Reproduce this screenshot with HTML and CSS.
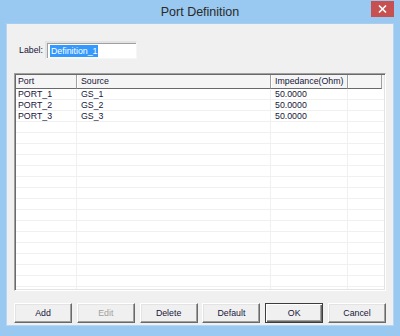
FILE: index.html
```html
<!DOCTYPE html>
<html>
<head>
<meta charset="utf-8">
<link rel="stylesheet" href="styles.css">
</head>
<body>
<div class="window">
  <div class="titlebar">
    <span class="title">Port Definition</span>
    <div class="close"><svg width="9" height="8" viewBox="0 0 9 8"><path d="M1 0.5 L8 7.5 M8 0.5 L1 7.5" stroke="#fff" stroke-width="1.6"/></svg></div>
  </div>
  <div class="client">
    <div class="label-row">
      <span class="label">Label:</span>
      <div class="input"><span class="sel">Definition_1</span></div>
    </div>
    <div class="table">
      <div class="row head">
        <div class="c c1">Port</div><div class="c c2">Source</div><div class="c c3">Impedance(Ohm)</div><div class="c c4"></div>
      </div>
      <div class="body">
        <div class="row"><div class="c c1">PORT_1</div><div class="c c2">GS_1</div><div class="c c3">50.0000</div><div class="c c4"></div></div>
        <div class="row"><div class="c c1">PORT_2</div><div class="c c2">GS_2</div><div class="c c3">50.0000</div><div class="c c4"></div></div>
        <div class="row"><div class="c c1">PORT_3</div><div class="c c2">GS_3</div><div class="c c3">50.0000</div><div class="c c4"></div></div>
        <div class="row"><div class="c c1"></div><div class="c c2"></div><div class="c c3"></div><div class="c c4"></div></div>
        <div class="row"><div class="c c1"></div><div class="c c2"></div><div class="c c3"></div><div class="c c4"></div></div>
        <div class="row"><div class="c c1"></div><div class="c c2"></div><div class="c c3"></div><div class="c c4"></div></div>
        <div class="row"><div class="c c1"></div><div class="c c2"></div><div class="c c3"></div><div class="c c4"></div></div>
        <div class="row"><div class="c c1"></div><div class="c c2"></div><div class="c c3"></div><div class="c c4"></div></div>
        <div class="row"><div class="c c1"></div><div class="c c2"></div><div class="c c3"></div><div class="c c4"></div></div>
        <div class="row"><div class="c c1"></div><div class="c c2"></div><div class="c c3"></div><div class="c c4"></div></div>
        <div class="row"><div class="c c1"></div><div class="c c2"></div><div class="c c3"></div><div class="c c4"></div></div>
        <div class="row"><div class="c c1"></div><div class="c c2"></div><div class="c c3"></div><div class="c c4"></div></div>
        <div class="row"><div class="c c1"></div><div class="c c2"></div><div class="c c3"></div><div class="c c4"></div></div>
        <div class="row"><div class="c c1"></div><div class="c c2"></div><div class="c c3"></div><div class="c c4"></div></div>
        <div class="row"><div class="c c1"></div><div class="c c2"></div><div class="c c3"></div><div class="c c4"></div></div>
        <div class="row"><div class="c c1"></div><div class="c c2"></div><div class="c c3"></div><div class="c c4"></div></div>
        <div class="row"><div class="c c1"></div><div class="c c2"></div><div class="c c3"></div><div class="c c4"></div></div>
        <div class="row"><div class="c c1"></div><div class="c c2"></div><div class="c c3"></div><div class="c c4"></div></div>
        <div class="row"><div class="c c1"></div><div class="c c2"></div><div class="c c3"></div><div class="c c4"></div></div>
      </div>
    </div>
    <div class="buttons">
      <div class="btn">Add</div>
      <div class="btn disabled">Edit</div>
      <div class="btn">Delete</div>
      <div class="btn">Default</div>
      <div class="btn default">OK</div>
      <div class="btn">Cancel</div>
    </div>
  </div>
</div>
</body>
</html>
```
FILE: styles.css
```css
html, body {
  margin: 0;
  padding: 0;
}
body {
  width: 400px;
  height: 336px;
  background: #99c8f0;
  font-family: "Liberation Sans", Arial, sans-serif;
  overflow: hidden;
}
.window {
  width: 400px;
  height: 336px;
  display: flex;
  flex-direction: column;
}
.titlebar {
  height: 23px;
  position: relative;
  display: flex;
  align-items: center;
  justify-content: center;
}
.title {
  font-size: 12.5px;
  color: #2a2a2a;
  margin-top: 1px;
}
.close {
  position: absolute;
  left: 371px;
  top: 1px;
  width: 23px;
  height: 16px;
  background: #c75050;
  display: flex;
  align-items: center;
  justify-content: center;
}
.client {
  margin: 0 6px 10px 6px;
  height: 303px;
  border: 1px solid #b7d6f2;
  border-top-color: #a9cdee;
  background: #f0f0f0;
  box-sizing: border-box;
  display: flex;
  flex-direction: column;
}
.label-row {
  display: flex;
  align-items: center;
  margin-top: 17px;
  padding-left: 12px;
  height: 18px;
}
.label {
  font-size: 8.8px;
  color: #16163a;
  width: 26px;
}
.input {
  width: 92px;
  height: 18px;
  box-sizing: border-box;
  background: #fff;
  border-top: 2px solid #e3e3e3;
  border-left: 2px solid #e3e3e3;
  border-right: 1px solid #f6f6f6;
  border-bottom: 1px solid #f6f6f6;
  box-shadow: inset 1px 1px 0 #a0a0a0;
  display: flex;
  align-items: center;
  padding-left: 3px;
}
.sel {
  background: #3399ff;
  color: #fff;
  font-size: 8.8px;
  line-height: 12px;
  padding: 0 1px;
}
.table {
  margin: 14px 7px 0 7px;
  height: 218px;
  box-sizing: border-box;
  border-top: 1px solid #a0a0a0;
  border-left: 1px solid #a0a0a0;
  border-right: 1px solid #ffffff;
  border-bottom: 1px solid #ffffff;
  box-shadow: inset 1px 1px 0 #696969, inset -1px -1px 0 #e3e3e3;
  background: #fff;
  padding: 1px;
  display: flex;
  flex-direction: column;
  overflow: hidden;
}
.row {
  display: flex;
  height: 11px;
  flex: none;
}
.c {
  box-sizing: border-box;
  font-size: 8.8px;
  color: #16163a;
  line-height: 10px;
  padding-left: 2px;
  border-right: 1px solid #f0f0f0;
  border-bottom: 1px solid #f0f0f0;
  white-space: nowrap;
  overflow: hidden;
}
.c1 { width: 61px; }
.c2 { width: 194px; padding-left: 4px; }
.c3 { width: 77px; padding-left: 4px; }
.c4 { flex: 1; border-right: none; }
.head {
  height: 14px;
  background: #f5f5f5;
}
.head .c {
  line-height: 13px;
  border-right: 1px solid #a0a0a0;
  border-bottom: 1px solid #696969;
  box-shadow: inset 1px 0 0 #fff;
}
.head .c1 { box-shadow: none; }
.head .c4 { border-right: 1px solid #a0a0a0; flex: none; width: 34px; }
.body {
  flex: 1;
  overflow: hidden;
}
.buttons {
  display: flex;
  justify-content: space-between;
  margin: 12px 7px 0 7px;
}
.btn {
  width: 58px;
  height: 20px;
  box-sizing: border-box;
  background: #f0f0f0;
  border-top: 1px solid #ffffff;
  border-left: 1px solid #ffffff;
  border-right: 1px solid #696969;
  border-bottom: 1px solid #696969;
  box-shadow: inset -1px -1px 0 #a0a0a0, inset 1px 1px 0 #e3e3e3;
  font-size: 8.8px;
  color: #16163a;
  display: flex;
  align-items: center;
  justify-content: center;
}
.btn.disabled {
  color: #a0a0a0;
}
.btn.default {
  border: 1px solid #3c3c3c;
  box-shadow: inset 1px 1px 0 #fff, inset -1px -1px 0 #696969, inset -2px -2px 0 #a0a0a0;
}
```
